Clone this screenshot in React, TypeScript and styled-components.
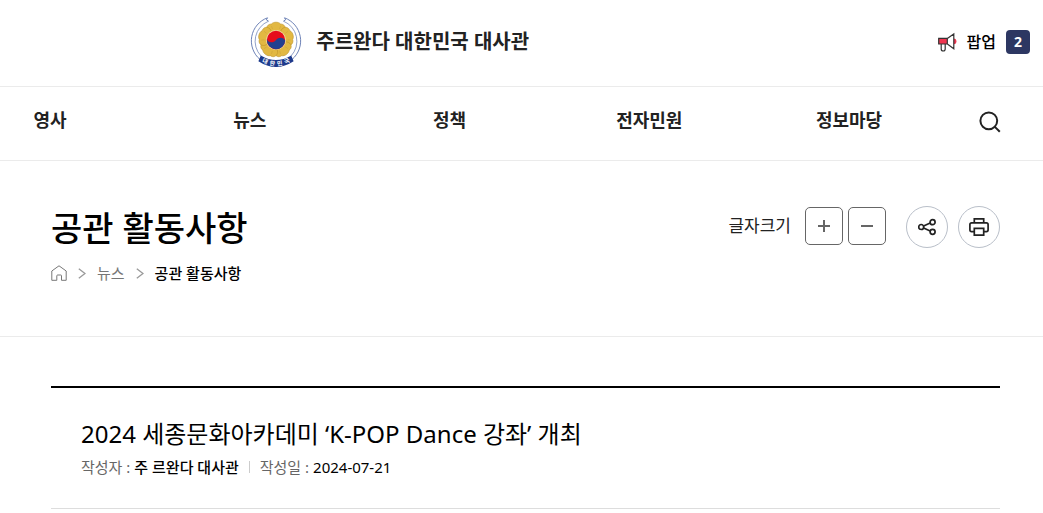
import React from 'react';
import styled, { createGlobalStyle } from 'styled-components';

const GlobalStyle = createGlobalStyle`
  *, *::before, *::after { box-sizing: border-box; }
  body {
    margin: 0;
    background: #fff;
    color: #000;
    font-family: "Noto Sans", "Noto Sans CJK KR", sans-serif;
    font-size: 16px;
    line-height: 24px;
  }
  h1, h2, p, ul, ol, dl, dd { margin: 0; padding: 0; }
  ul, ol { list-style: none; }
  a { color: inherit; text-decoration: none; }
  button { font: inherit; color: inherit; padding: 0; background: none; border: 0; cursor: pointer; }
  svg { display: block; flex: none; }
`;

const TopBar = styled.header`
  display: flex;
  align-items: center;
  justify-content: space-between;
  padding: 16px 13px 18px 24%;
`;

const Brand = styled.a`
  display: flex;
  align-items: center;
  gap: 14px;
  font-size: 20px;
  font-weight: 700;
  color: #222;
`;

const PopupButton = styled.button`
  display: flex;
  align-items: center;
  gap: 10px;
  font-weight: 500;
`;

const Count = styled.span`
  width: 24px;
  height: 24px;
  border-radius: 4px;
  background: #2d3762;
  color: #fff;
  font-size: 14px;
  font-weight: 700;
  text-align: center;
`;

const NavBar = styled.nav`
  display: flex;
  align-items: center;
  gap: 70px;
  padding: 13px 32px 17px 0;
  border: solid #ebebeb;
  border-width: 1px 0;
`;

const NavList = styled.ul`
  flex: 1;
  display: flex;
  justify-content: space-between;
`;

const NavItem = styled.li`
  width: 100px;
  padding: 4px 0 8px;
  text-align: center;
  font-size: 18px;
  font-weight: 700;
  color: #222;
`;

const SearchButton = styled.button`
  display: grid;
  place-items: center;
  width: 42px;
  height: 43px;
`;

const PageHead = styled.section`
  display: flex;
  justify-content: space-between;
  align-items: flex-start;
  padding: 45px 43px 51px 51px;
  border-bottom: 1px solid #ebebeb;
`;

const PageTitle = styled.h1`
  font-size: 34px;
  font-weight: 500;
  line-height: 44px;
`;

const Crumbs = styled.ol`
  display: flex;
  align-items: center;
  gap: 11px;
  margin-top: 11px;
  font-size: 15px;
`;

const Crumb = styled.li<{ $current?: boolean }>`
  color: ${(p) => (p.$current ? '#000' : '#767676')};
  font-weight: ${(p) => (p.$current ? 500 : 400)};
`;

const Tools = styled.div`
  display: flex;
  align-items: flex-start;
  gap: 10px;
`;

const SizeTools = styled.div`
  display: flex;
  align-items: center;
  gap: 5px;
  margin: 1px 10px 0 0;
`;

const SizeLabel = styled.span`
  margin-right: 9px;
  font-size: 17px;
  color: #222;
`;

const ToolButton = styled.button<{ $round?: boolean }>`
  display: grid;
  place-items: center;
  width: ${(p) => (p.$round ? 42 : 38)}px;
  height: ${(p) => (p.$round ? 42 : 38)}px;
  border: 1px solid ${(p) => (p.$round ? '#b9bfc9' : '#666')};
  border-radius: ${(p) => (p.$round ? '50%' : '5px')};
`;

const Article = styled.article`
  margin: 49px 43px 0 51px;
  padding: 28px 30px 29px;
  border-top: 2px solid #000;
  border-bottom: 1px solid #ddd;
`;

const ArticleTitle = styled.h2`
  font-size: 24px;
  font-weight: 400;
  line-height: 36px;
`;

const Meta = styled.dl`
  display: flex;
  align-items: center;
  margin-top: 3px;
  font-size: 15px;
`;

const MetaItem = styled.div<{ $strong?: boolean }>`
  display: flex;
  gap: 4px;
  dt { color: #666; }
  dd { font-weight: ${(p) => (p.$strong ? 500 : 400)}; }
`;

const Divider = styled.span`
  width: 1px;
  height: 12px;
  margin: 0 10px;
  background: #ccc;
`;

const petals = [0, 72, 144, 216, 288];

const Emblem = () => (
  <svg width="52" height="52" viewBox="-1 0 52 52" aria-hidden="true">
    <g fill="none" stroke="#5c74ae" strokeWidth="0.9">
      <path d="M16.5 1.8 A24.5 24.5 0 0 0 9 43.5" />
      <path d="M17.5 5.2 A21.6 21.6 0 0 0 10 40" stroke="#8596c2" />
      <path d="M33.5 1.8 A24.5 24.5 0 0 1 41 43.5" />
      <path d="M32.5 5.2 A21.6 21.6 0 0 1 40 40" stroke="#8596c2" />
      <path d="M16.5 1.8 L15.4 3.8 L17.5 5.2 M33.5 1.8 L34.6 3.8 L32.5 5.2" />
    </g>
    <g transform="translate(25 24)">
      {petals.map((a) => (
        <g key={a} transform={`rotate(${a})`}>
          <path
            d="M0 0 L-8.6 -9 C-10.6 -13 -8 -16 -4.6 -16 C-2.6 -18.4 2.6 -18.4 4.6 -16 C8 -16 10.6 -13 8.6 -9 Z"
            fill="#e2b842"
            stroke="#c0952c"
            strokeWidth="0.6"
          />
          <path d="M-3.4 -11 L-4.6 -14 M3.4 -11 L4.6 -14" stroke="#cfa53a" strokeWidth="0.6" />
        </g>
      ))}
      <circle r="10" fill="#f1dfa8" />
      <circle r="9.2" fill="#e60c1c" />
      <path
        d="M-9.2 0 A5.4 5.4 0 0 0 0 0 A5.4 5.4 0 0 1 9.2 0 A9.2 9.2 0 0 1 -9.2 0 Z"
        fill="#23408f"
        transform="rotate(4)"
      />
    </g>
    <path d="M9.8 39.4 Q25 48.4 40.2 39.4 L42.6 45.2 Q25 56.8 7.4 45.2 Z" fill="#1d3a8c" />
    <g fill="#fff" fontSize="6" fontWeight="700" textAnchor="middle">
      <text transform="translate(13.2 47) rotate(24)">대</text>
      <text transform="translate(21 49.6) rotate(8)">한</text>
      <text transform="translate(29 49.6) rotate(-8)">민</text>
      <text transform="translate(36.8 47) rotate(-24)">국</text>
    </g>
  </svg>
);

const Megaphone = () => (
  <svg width="19" height="20" viewBox="0 0 19 20" aria-hidden="true">
    <path d="M15.8 6.4 A2.6 2.9 0 0 1 15.8 12.2 Z" fill="#ef3550" />
    <path d="M0.7 6.4 H9.3 V12 H0.7 Z" fill="#ef3550" />
    <path
      d="M9.3 6.4 H0.7 V12 H9.3 M9.3 6.4 L15.8 2 V16.8 L9.3 12 Z M3.2 12 V17 Q3.2 19 5.2 19 Q7.2 19 7.2 17 V12"
      fill="none"
      stroke="#333"
      strokeWidth="1.2"
    />
  </svg>
);

const SearchIcon = () => (
  <svg width="22" height="22" viewBox="0 0 22 22" fill="none" stroke="#222" strokeWidth="2" aria-hidden="true">
    <circle cx="9.8" cy="9.8" r="8.4" />
    <path d="M15.6 15.6 L20.8 20.8" />
  </svg>
);

const HomeIcon = () => (
  <svg width="16" height="16" viewBox="0 0 16 16" fill="none" stroke="#777" aria-hidden="true">
    <path d="M0.8 6 L8 0.8 L15.2 6 V15.3 H10.5 V10.8 Q10.5 10 9.7 10 H6.6 Q5.8 10 5.8 10.8 V15.3 H0.8 Z" />
  </svg>
);

const Chevron = () => (
  <svg width="8" height="11" viewBox="0 0 8 11" fill="none" stroke="#999" strokeWidth="1.3" aria-hidden="true">
    <path d="M0.8 0.8 L7 5.5 L0.8 10.2" />
  </svg>
);

const SignIcon = ({ plus }: { plus?: boolean }) => (
  <svg width="12" height="12" viewBox="0 0 12 12" stroke="#666" strokeWidth="2" aria-hidden="true">
    <path d={plus ? 'M0 6 H12 M6 0 V12' : 'M0 6 H12'} />
  </svg>
);

const ShareIcon = () => (
  <svg width="18" height="18" viewBox="0 0 18 18" fill="none" stroke="#222" strokeWidth="1.7" aria-hidden="true">
    <circle cx="3.2" cy="9" r="2.5" />
    <circle cx="14.6" cy="4.2" r="2.5" />
    <circle cx="14.6" cy="13.8" r="2.5" />
    <path d="M5.6 8.1 L12.2 5.1 M5.6 9.9 L12.2 12.9" />
  </svg>
);

const PrintIcon = () => (
  <svg width="20" height="18" viewBox="0 0 20 18" fill="none" stroke="#222" strokeWidth="1.7" aria-hidden="true">
    <path d="M5.3 4.6 V0.9 H14.7 V4.6" />
    <path d="M5.3 13.6 H2.6 Q0.9 13.6 0.9 11.8 V6.6 Q0.9 4.8 2.6 4.8 H17.4 Q19.1 4.8 19.1 6.6 V11.8 Q19.1 13.6 17.4 13.6 H14.7" />
    <path d="M5.3 10.4 H14.7 V17.1 H5.3 Z" />
  </svg>
);

const menu = ['영사', '뉴스', '정책', '전자민원', '정보마당'];

export default function App() {
  return (
    <>
      <GlobalStyle />
      <TopBar>
        <Brand href="#">
          <Emblem />
          주르완다 대한민국 대사관
        </Brand>
        <PopupButton type="button">
          <Megaphone />
          팝업
          <Count>2</Count>
        </PopupButton>
      </TopBar>
      <NavBar>
        <NavList>
          {menu.map((name) => (
            <NavItem key={name}>
              <a href="#">{name}</a>
            </NavItem>
          ))}
        </NavList>
        <SearchButton type="button" aria-label="검색">
          <SearchIcon />
        </SearchButton>
      </NavBar>
      <main>
        <PageHead>
          <div>
            <PageTitle>공관 활동사항</PageTitle>
            <Crumbs>
              <Crumb>
                <a href="#" aria-label="홈">
                  <HomeIcon />
                </a>
              </Crumb>
              <Chevron />
              <Crumb>
                <a href="#">뉴스</a>
              </Crumb>
              <Chevron />
              <Crumb $current>공관 활동사항</Crumb>
            </Crumbs>
          </div>
          <Tools>
            <SizeTools>
              <SizeLabel>글자크기</SizeLabel>
              <ToolButton type="button" aria-label="글자 크게">
                <SignIcon plus />
              </ToolButton>
              <ToolButton type="button" aria-label="글자 작게">
                <SignIcon />
              </ToolButton>
            </SizeTools>
            <ToolButton type="button" $round aria-label="공유">
              <ShareIcon />
            </ToolButton>
            <ToolButton type="button" $round aria-label="인쇄">
              <PrintIcon />
            </ToolButton>
          </Tools>
        </PageHead>
        <Article>
          <ArticleTitle>2024 세종문화아카데미 ‘K-POP Dance 강좌’ 개최</ArticleTitle>
          <Meta>
            <MetaItem $strong>
              <dt>작성자 :</dt>
              <dd>주 르완다 대사관</dd>
            </MetaItem>
            <Divider />
            <MetaItem>
              <dt>작성일 :</dt>
              <dd>2024-07-21</dd>
            </MetaItem>
          </Meta>
        </Article>
      </main>
    </>
  );
}
